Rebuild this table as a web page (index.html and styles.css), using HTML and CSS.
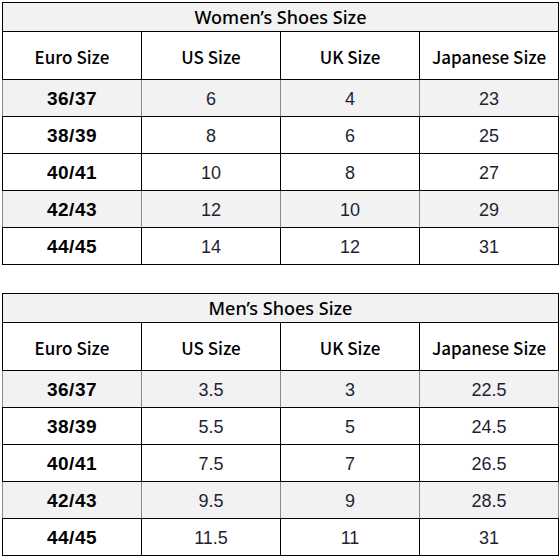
FILE: index.html
```html
<!DOCTYPE html>
<html>
<head>
<meta charset="utf-8">
<link rel="stylesheet" href="styles.css">
</head>
<body>
<div class="page">
  <table class="size-table">
    <tr class="title-row"><th colspan="4">Women’s Shoes Size</th></tr>
    <tr class="head-row"><th>Euro Size</th><th>US Size</th><th>UK Size</th><th>Japanese Size</th></tr>
    <tr class="grey"><td class="euro">36/37</td><td>6</td><td>4</td><td>23</td></tr>
    <tr><td class="euro">38/39</td><td>8</td><td>6</td><td>25</td></tr>
    <tr><td class="euro">40/41</td><td>10</td><td>8</td><td>27</td></tr>
    <tr class="grey"><td class="euro">42/43</td><td>12</td><td>10</td><td>29</td></tr>
    <tr><td class="euro">44/45</td><td>14</td><td>12</td><td>31</td></tr>
  </table>
  <table class="size-table">
    <tr class="title-row"><th colspan="4">Men’s Shoes Size</th></tr>
    <tr class="head-row"><th>Euro Size</th><th>US Size</th><th>UK Size</th><th>Japanese Size</th></tr>
    <tr class="grey"><td class="euro">36/37</td><td>3.5</td><td>3</td><td>22.5</td></tr>
    <tr><td class="euro">38/39</td><td>5.5</td><td>5</td><td>24.5</td></tr>
    <tr><td class="euro">40/41</td><td>7.5</td><td>7</td><td>26.5</td></tr>
    <tr class="grey"><td class="euro">42/43</td><td>9.5</td><td>9</td><td>28.5</td></tr>
    <tr><td class="euro">44/45</td><td>11.5</td><td>11</td><td>31</td></tr>
  </table>
</div>
</body>
</html>
```
FILE: styles.css
```css
html, body {
  margin: 0;
  padding: 0;
  background: #ffffff;
}
.page {
  padding: 2px 2px 0 2px;
  display: flex;
  flex-direction: column;
  gap: 28px;
}
.size-table {
  border-collapse: collapse;
  table-layout: fixed;
  width: 557px;
  border: 1px solid #000;
}
.size-table th,
.size-table td {
  border: 1px solid #000;
  padding: 0;
  text-align: center;
  width: 25%;
}
.title-row th {
  height: 28px;
  background: #f2f2f2;
  font-family: "Noto Sans", "Open Sans", sans-serif;
  font-weight: 500;
  font-size: 18px;
  color: #000;
}
.head-row th {
  height: 45px;
  padding-top: 2px;
  background: #fff;
  font-family: "Noto Sans CJK SC", "Noto Sans", sans-serif;
  font-weight: 500;
  font-size: 17px;
  color: #000;
}
.size-table td {
  height: 34px;
  padding-top: 2px;
  font-family: "Liberation Sans", Arial, sans-serif;
  font-size: 18px;
  color: #1f1f33;
}
.size-table td.euro {
  font-weight: 700;
  font-size: 19px;
  letter-spacing: 0.5px;
  color: #000;
}
.grey td {
  background: #f2f2f2;
  border-left-color: #8a8a8a;
  border-right-color: #8a8a8a;
}
```
